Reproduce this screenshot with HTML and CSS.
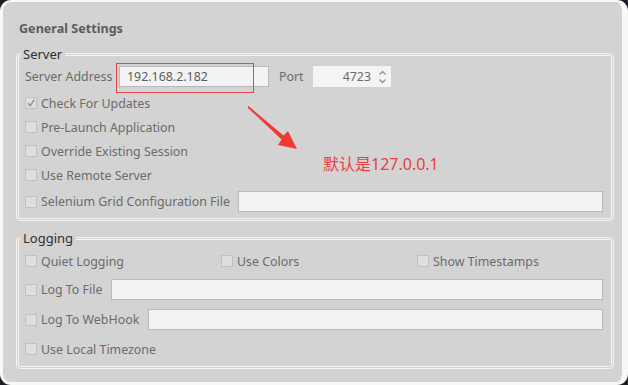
FILE: index.html
```html
<!DOCTYPE html>
<html lang="zh-CN">
<head>
    <meta charset="UTF-8">
    <meta name="viewport" content="width=device-width, initial-scale=1.0">
    <title>General Settings</title>
    <link rel="stylesheet" href="styles.css">
</head>
<body>
    <div class="frame">
        <div class="window">
            <h2 class="title">General Settings</h2>

            <!-- Server -->
            <fieldset class="group">
                <legend>Server</legend>

                <div class="row row-first">
                    <span class="label label-address">Server Address</span>
                    <span class="field field-address">192.168.2.182</span>
                    <span class="label label-port">Port</span>
                    <span class="spin">
                        <span class="spin-value">4723</span>
                        <svg class="spin-arrows" width="9" height="14" viewBox="0 0 9 14">
                            <polyline points="1.5,4.5 4.5,1.5 7.5,4.5" fill="none" stroke="#8a8a8a" stroke-width="1.2"/>
                            <polyline points="1.5,9.5 4.5,12.5 7.5,9.5" fill="none" stroke="#8a8a8a" stroke-width="1.2"/>
                        </svg>
                    </span>
                </div>

                <label class="row check">
                    <span class="box box-checked">
                        <svg width="10" height="10" viewBox="0 0 10 10">
                            <polyline points="2,5.2 4.2,7.6 8.2,1.8" fill="none" stroke="#9a9a9a" stroke-width="1.6"/>
                        </svg>
                    </span>
                    Check For Updates
                </label>
                <label class="row check"><span class="box"></span>Pre-Launch Application</label>
                <label class="row check"><span class="box"></span>Override Existing Session</label>
                <label class="row check"><span class="box"></span>Use Remote Server</label>

                <div class="row row-last">
                    <label class="check"><span class="box"></span>Selenium Grid Configuration File</label>
                    <span class="field field-grow field-selenium"></span>
                </div>
            </fieldset>

            <!-- Logging -->
            <fieldset class="group group-logging">
                <legend>Logging</legend>

                <div class="row log-row-1 cols">
                    <label class="check"><span class="box"></span>Quiet Logging</label>
                    <label class="check"><span class="box"></span>Use Colors</label>
                    <label class="check"><span class="box"></span>Show Timestamps</label>
                </div>
                <div class="row log-row-2">
                    <label class="check"><span class="box"></span>Log To File</label>
                    <span class="field field-grow"></span>
                </div>
                <div class="row log-row-3">
                    <label class="check"><span class="box"></span>Log To WebHook</label>
                    <span class="field field-grow"></span>
                </div>
                <label class="row check log-row-4"><span class="box"></span>Use Local Timezone</label>
            </fieldset>

            <!-- 标注 -->
            <div class="mark"></div>
            <svg class="arrow" width="56" height="50" viewBox="245 104 56 50">
                <polygon points="248.5,106 283.5,135.5 288,131 297,149 278,145 281.5,139.5 247.5,107.5" fill="#f03a34"/>
            </svg>
            <div class="note">默认是127.0.0.1</div>
        </div>
    </div>
</body>
</html>
```

FILE: styles.css
```css
body {
    margin: 0;
    padding: 0;
    font-family: 'Noto Sans', 'Noto Sans CJK SC', sans-serif;
    font-size: 12.4px;
    color: #6b6b6b;
}

.frame {
    width: 628px;
    height: 385px;
    background-color: #1b1f24;
}

.window {
    position: relative;
    box-sizing: border-box;
    width: 628px;
    height: 385px;
    background-color: #d3d3d3;
    border-style: solid;
    border-color: #f8f8f8;
    border-width: 2px 6px 3px 3px;
    border-radius: 11px;
    padding-top: 17px;
}

.title {
    margin: 0 0 7px 16px;
    font-size: 12.6px;
    line-height: 20px;
    font-weight: bold;
    color: #5c5c5c;
}

.group {
    margin: 0 8px 0 13px;
    padding: 0 8px 2px 6px;
    min-inline-size: 0;
    border: 3px double #f4f4f4;
    border-radius: 4px;
}

.group legend {
    padding: 0 3px;
    margin-left: -5px;
    font-size: 13px;
    line-height: 16px;
    color: #2e2e2e;
}

.group-logging {
    margin-top: 9px;
    padding-top: 2px;
}

.row {
    display: flex;
    align-items: center;
    height: 24px;
}

.row-first {
    height: 29px;
}

.row-last {
    height: 29px;
}

.log-row-1 {
    height: 26px;
}

.log-row-2 {
    height: 31px;
}

.log-row-3 {
    height: 29px;
}

.log-row-4 {
    height: 30px;
}

.cols {
    display: grid;
    grid-template-columns: 196px 196px auto;
    align-items: center;
}

.check {
    display: flex;
    align-items: center;
    white-space: nowrap;
}

.box {
    display: inline-flex;
    align-items: center;
    justify-content: center;
    box-sizing: border-box;
    width: 12px;
    height: 12px;
    margin-right: 4px;
    border: 1px solid #c2c2c2;
    background-color: #dedede;
}

.label {
    white-space: nowrap;
}

.label-address {
    width: 94px;
}

.label-port {
    width: 34px;
    margin-left: 10px;
}

.field {
    box-sizing: border-box;
    height: 21px;
    border: 1px solid #b9b9b9;
    background-color: #f3f3f3;
    color: #5e5e5e;
    line-height: 19px;
}

.field-address {
    width: 150px;
    padding-left: 7px;
}

.field-grow {
    flex: 1;
    margin-left: 9px;
}

.field-selenium {
    margin-left: 8px;
}

.spin {
    display: flex;
    align-items: center;
    justify-content: flex-end;
    box-sizing: border-box;
    width: 78px;
    height: 21px;
    padding-right: 4px;
    background-color: #f4f4f4;
    color: #6a6a6a;
}

.spin-value {
    margin-right: 7px;
}

.mark {
    position: absolute;
    left: 113px;
    top: 61px;
    width: 136px;
    height: 28px;
    border: 1px solid #e4474a;
}

.arrow {
    position: absolute;
    left: 242px;
    top: 102px;
}

.note {
    position: absolute;
    left: 320px;
    top: 152px;
    font-size: 16px;
    line-height: 20px;
    color: #e8403e;
}
```
